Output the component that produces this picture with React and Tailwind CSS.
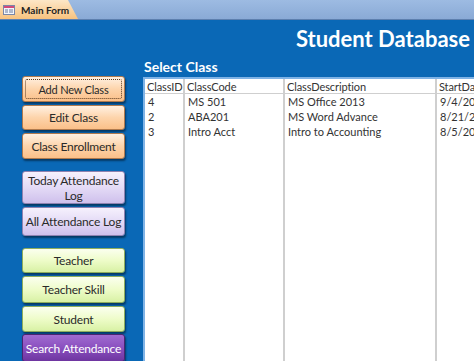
import React from "react";

const orange =
  "border border-[#b07a4e] bg-gradient-to-b from-[#fff1e2] via-[#fdd4ab] to-[#fbc089] text-[#2a2a2a]";
const lilac =
  "border border-[#8f82b0] bg-gradient-to-b from-[#f6f1fd] via-[#e4dbf6] to-[#cfc0ec] text-[#2a2a2a]";
const lime =
  "border border-[#8fae5c] bg-gradient-to-b from-[#fbffef] via-[#eefcc9] to-[#d8f1a4] text-[#2a2a2a]";
const grape =
  "border border-[#4b2470] bg-gradient-to-b from-[#a06bd0] via-[#8a4fbf] to-[#6e35a0] text-white";

function NavButton({ children, tone, h = "h-[26px]", focused = false, className = "" }) {
  return (
    <button
      type="button"
      className={`relative w-[103px] ${h} shrink-0 rounded-[3px] shadow-[1px_2px_2px_rgba(0,0,0,0.45)] px-0 leading-[15px] whitespace-nowrap tracking-[-0.2px] ${tone} ${className}`}
    >
      {focused && (
        <span className="absolute inset-[2px] border border-dotted border-[#5a3a20] rounded-[2px]" />
      )}
      {children}
    </button>
  );
}

const columns = [
  { head: "ClassID", w: "w-[40px]", cells: ["4", "2", "3"] },
  { head: "ClassCode", w: "w-[100px]", cells: ["MS 501", "ABA201", "Intro Acct"] },
  {
    head: "ClassDescription",
    w: "w-[152px]",
    cells: ["MS Office 2013", "MS Word Advance", "Intro to Accounting"],
  },
  { head: "StartDate", w: "w-[110px]", cells: ["9/4/2013", "8/21/2013", "8/5/2013"] },
];

export default function App() {
  return (
    <div
      className="w-[474px] h-[361px] overflow-hidden bg-[#0a68b6] flex flex-col"
      style={{ fontFamily: "Lato, 'Open Sans', sans-serif" }}
    >
      {/* Tab strip */}
      <div className="h-[20px] shrink-0 bg-gradient-to-b from-[#9dbbe2] to-[#8aaad6] border-b border-[#5d7fae] flex items-end">
        <div className="h-[19px] w-[78px] bg-gradient-to-b from-[#fde7c7] to-[#f8c27e] [clip-path:polygon(0_0,68px_0,78px_100%,0_100%)] flex items-center pl-[3px] gap-[6px]">
          <svg width="12" height="10" viewBox="0 0 12 10" className="shrink-0">
            <rect x="0.5" y="0.5" width="11" height="9" fill="#f4f6fb" stroke="#7a86a8" />
            <rect x="1" y="1" width="10" height="2" fill="#d24a7a" />
            <rect x="2" y="4.5" width="3" height="1" fill="#6b7aa0" />
            <rect x="6" y="4.5" width="4" height="1" fill="#6b7aa0" />
            <rect x="2" y="6.5" width="3" height="1" fill="#6b7aa0" />
            <rect x="6" y="6.5" width="4" height="1" fill="#6b7aa0" />
          </svg>
          <span className="text-[10px] font-bold text-[#222] leading-none whitespace-nowrap">Main Form</span>
        </div>
      </div>

      <div className="flex flex-1 min-h-0">
        {/* Left navigation */}
        <div className="w-[143px] shrink-0 pl-[22px] pt-[56px] flex flex-col text-[12px]">
          <div className="flex flex-col gap-[3px]">
            <NavButton tone={orange} focused className="text-[11px]">Add New Class</NavButton>
            <NavButton tone={orange} h="h-[25px]">Edit Class</NavButton>
            <NavButton tone={orange}>Class Enrollment</NavButton>
          </div>
          <div className="flex flex-col gap-[3px] mt-[12px]">
            <NavButton tone={lilac} h="h-[33px]">
              Today Attendance
              <br />
              Log
            </NavButton>
            <NavButton tone={lilac} h="h-[29px]">All Attendance Log</NavButton>
          </div>
          <div className="flex flex-col gap-[3px] mt-[12px]">
            <NavButton tone={lime} h="h-[25px]">Teacher</NavButton>
            <NavButton tone={lime} h="h-[27px]">Teacher Skill</NavButton>
            <NavButton tone={lime}>Student</NavButton>
            <NavButton tone={grape} h="h-[28px]" className="-mt-[1px]">Search Attendance</NavButton>
          </div>
        </div>

        {/* Main area */}
        <div className="flex-1 min-w-0 flex flex-col">
          <div className="h-[36px] flex items-center justify-end pr-[4px] pt-[2px]">
            <h1 className="text-[22px] font-bold text-white leading-none whitespace-nowrap">
              Student Database
            </h1>
          </div>
          <div className="h-[21px] flex items-end">
            <h2 className="text-[14px] font-bold text-white leading-none pb-[3px] pl-[1px]">
              Select Class
            </h2>
          </div>
          <div className="flex-1 min-h-0 border-l-2 border-t-2 border-[#7fb3e6] bg-white flex text-[11px] text-[#333]">
            {columns.map((col) => (
              <div
                key={col.head}
                className={`${col.w} shrink-0 border-r-2 border-[#cfcfcf] flex flex-col`}
              >
                <div className="h-[15px] border-b border-[#cfcfcf] px-[2px] leading-[15px] whitespace-nowrap overflow-hidden tracking-[-0.1px]">
                  {col.head}
                </div>
                {col.cells.map((c, i) => (
                  <div key={i} className="h-[15px] px-[3px] leading-[15px] whitespace-nowrap overflow-hidden">
                    {c}
                  </div>
                ))}
              </div>
            ))}
          </div>
        </div>
      </div>
    </div>
  );
}
